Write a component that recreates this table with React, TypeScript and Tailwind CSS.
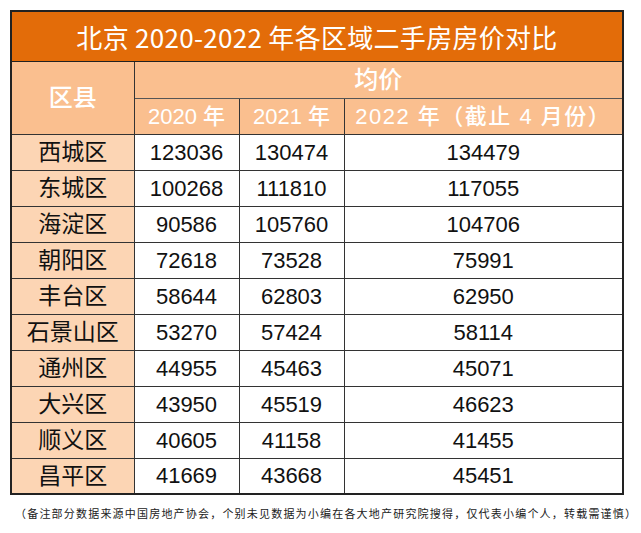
const rows: [string, number, number, number][] = [
  ["西城区", 123036, 130474, 134479],
  ["东城区", 100268, 111810, 117055],
  ["海淀区", 90586, 105760, 104706],
  ["朝阳区", 72618, 73528, 75991],
  ["丰台区", 58644, 62803, 62950],
  ["石景山区", 53270, 57424, 58114],
  ["通州区", 44955, 45463, 45071],
  ["大兴区", 43950, 45519, 46623],
  ["顺义区", 40605, 41158, 41455],
  ["昌平区", 41669, 43668, 45451],
]

const cjk = { fontFamily: '"Liberation Sans", "Noto Sans CJK SC", sans-serif' }

export default function App() {
  return (
    <div className="w-[641px] h-[533px] bg-white pt-[10px] pl-[10px]" style={cjk}>
      <table className="w-[612px] table-fixed border-collapse border-2 border-[#222]">
        <colgroup>
          <col className="w-[123px]" />
          <col className="w-[105px]" />
          <col className="w-[105px]" />
          <col className="w-[279px]" />
        </colgroup>
        <thead>
          <tr className="h-[50px]">
            <th
              colSpan={4}
              className="bg-[#e36c09] text-white text-[26px] font-normal tracking-[0.3px] border-b border-[#222] p-0"
              style={{ fontFamily: '"Noto Sans CJK SC", sans-serif' }}
            >
              北京 2020-2022 年各区域二手房房价对比
            </th>
          </tr>
          <tr className="h-[36px]">
            <th
              rowSpan={2}
              className="bg-[#fabf8f] text-white text-[24px] font-medium border-r border-b border-[#333] p-0"
            >
              区县
            </th>
            <th
              colSpan={3}
              className="bg-[#fabf8f] text-white text-[24px] font-medium border-b border-[#555] p-0"
            >
              均价
            </th>
          </tr>
          <tr className="h-[36px]">
            <th className="bg-[#fabf8f] text-white text-[22px] font-medium border-r border-b border-[#333] p-0">
              2020 年
            </th>
            <th className="bg-[#fabf8f] text-white text-[22px] font-medium border-r border-b border-[#333] p-0">
              2021 年
            </th>
            <th className="bg-[#fabf8f] text-white text-[22px] font-medium tracking-[1.5px] border-b border-[#333] p-0">
              2022 年（截止 4 月份）
            </th>
          </tr>
        </thead>
        <tbody>
          {rows.map(([name, a, b, c]) => (
            <tr key={name} className="h-[36px]">
              <td className="bg-[#fcd5b4] text-[#111] text-[23px] text-center border border-[#333] p-0">
                {name}
              </td>
              <td className="text-[#111] text-[22px] text-center border border-[#333] p-0">{a}</td>
              <td className="text-[#111] text-[22px] text-center border border-[#333] p-0">{b}</td>
              <td className="text-[#111] text-[22px] text-center border border-[#333] p-0">{c}</td>
            </tr>
          ))}
        </tbody>
      </table>
      <p className="mt-[13px] ml-[5px] text-[11px] leading-[12px] tracking-[1.2px] text-[#222] whitespace-nowrap">
        （备注部分数据来源中国房地产协会，个别未见数据为小编在各大地产研究院搜得，仅代表小编个人，转载需谨慎）
      </p>
    </div>
  )
}
